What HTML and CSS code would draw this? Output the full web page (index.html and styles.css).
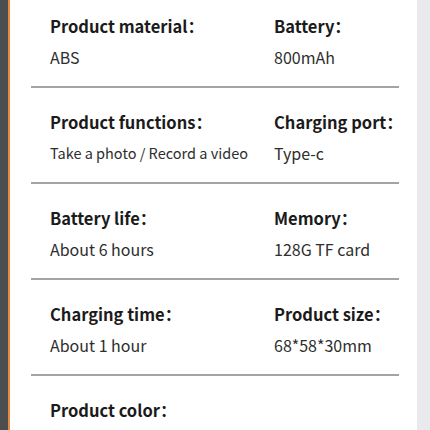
FILE: index.html
```html
<!DOCTYPE html>
<html>

<head>
    <title>Product parameters</title>
    <link rel="stylesheet" href="styles.css">
</head>

<body>
    <div id="page">
        <div id="edge"></div>
        <div id="sheet">
            <div class="specRow">
                <div class="spec">
                    <div class="label">Product material：</div>
                    <div class="value">ABS</div>
                </div>
                <div class="spec">
                    <div class="label">Battery：</div>
                    <div class="value">800mAh</div>
                </div>
            </div>
            <div class="specRow">
                <div class="spec">
                    <div class="label">Product functions：</div>
                    <div class="value small">Take a photo / Record a video</div>
                </div>
                <div class="spec">
                    <div class="label">Charging port：</div>
                    <div class="value">Type-c</div>
                </div>
            </div>
            <div class="specRow">
                <div class="spec">
                    <div class="label">Battery life：</div>
                    <div class="value">About 6 hours</div>
                </div>
                <div class="spec">
                    <div class="label">Memory：</div>
                    <div class="value">128G TF card</div>
                </div>
            </div>
            <div class="specRow">
                <div class="spec">
                    <div class="label">Charging time：</div>
                    <div class="value">About 1 hour</div>
                </div>
                <div class="spec">
                    <div class="label">Product size：</div>
                    <div class="value">68*58*30mm</div>
                </div>
            </div>
            <div class="specRow">
                <div class="spec">
                    <div class="label">Product color：</div>
                    <div class="value"></div>
                </div>
            </div>
        </div>
        <div id="rail"></div>
    </div>
</body>

</html>
```

FILE: styles.css
```css
body {
    margin: 0;
    padding: 0;
    background: #fff;
    font-family: "Noto Sans CJK SC", "Noto Sans", sans-serif;
    overflow: hidden;
}

#page {
    display: flex;
    height: 430px;
    overflow: hidden;
}

#edge {
    width: 8px;
    flex-shrink: 0;
    background: #4b4e51;
    border-right: 2px solid #e8893b;
}

#sheet {
    flex: 1;
    min-width: 0;
    padding: 0 18px 0 21px;
}

#rail {
    width: 13px;
    flex-shrink: 0;
    background: #e9e9ee;
}

.specRow {
    display: flex;
    padding: 22px 0 17px 19px;
    border-bottom: 2px solid #a3a3a3;
}

.specRow:first-child {
    padding-top: 14px;
}

.specRow:last-child {
    border-bottom: none;
}

.spec {
    width: 224px;
    flex-shrink: 0;
}

.spec + .spec {
    width: auto;
    flex: 1;
    min-width: 0;
}

.label {
    font-size: 16.5px;
    line-height: 24px;
    font-weight: bold;
    color: #1b1b1b;
    white-space: nowrap;
}

.value {
    margin-top: 7px;
    font-size: 16px;
    line-height: 24px;
    color: #2e2e2e;
    white-space: nowrap;
}

.value.small {
    font-size: 14.5px;
}
```
